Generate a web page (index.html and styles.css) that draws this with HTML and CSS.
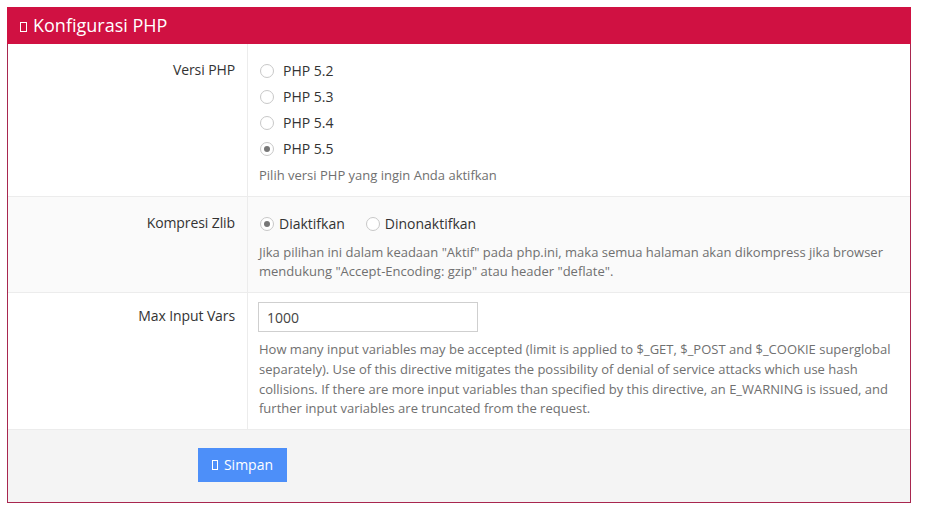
FILE: index.html
```html
<!DOCTYPE html>
<html lang="id">
<head>
<meta charset="utf-8">
<title>Konfigurasi PHP</title>
<link rel="stylesheet" href="styles.css">
</head>
<body>
<div class="panel">
  <div class="panel-heading"><span class="tofu tofu-head"></span>Konfigurasi PHP</div>
  <form class="form">
    <div class="row">
      <div class="label">Versi PHP</div>
      <div class="field">
        <label class="radio"><input type="radio" name="php"> PHP 5.2</label>
        <label class="radio"><input type="radio" name="php"> PHP 5.3</label>
        <label class="radio"><input type="radio" name="php"> PHP 5.4</label>
        <label class="radio"><input type="radio" name="php" checked> PHP 5.5</label>
        <p class="help help-single">Pilih versi PHP yang ingin Anda aktifkan</p>
      </div>
    </div>
    <div class="row row-alt">
      <div class="label">Kompresi Zlib</div>
      <div class="field">
        <div class="inline">
          <label class="radio radio-inline"><input type="radio" name="zlib" checked> Diaktifkan</label>
          <label class="radio radio-inline"><input type="radio" name="zlib"> Dinonaktifkan</label>
        </div>
        <p class="help">Jika pilihan ini dalam keadaan "Aktif" pada php.ini, maka semua halaman akan dikompress jika browser mendukung "Accept-Encoding: gzip" atau header "deflate".</p>
      </div>
    </div>
    <div class="row">
      <div class="label label-input">Max Input Vars</div>
      <div class="field field-input">
        <input class="text" type="text" value="1000">
        <p class="help">How many input variables may be accepted (limit is applied to $_GET, $_POST and $_COOKIE superglobal separately). Use of this directive mitigates the possibility of denial of service attacks which use hash collisions. If there are more input variables than specified by this directive, an E_WARNING is issued, and further input variables are truncated from the request.</p>
      </div>
    </div>
    <div class="footer">
      <button type="button" class="btn"><span class="tofu tofu-btn"></span>Simpan</button>
    </div>
  </form>
</div>
</body>
</html>
```
FILE: styles.css
```css
* { box-sizing: border-box; }
html, body { margin: 0; padding: 0; background: #fff; }
body {
  font-family: "Open Sans", "Liberation Sans", sans-serif;
  font-size: 14px;
  color: #333;
  padding: 7px 15px 0 7px;
}
.panel {
  width: 904px;
  border: 1px solid #a8274f;
  border-top: none;
}
.panel-heading {
  height: 37px;
  background: #d01142;
  color: #fff;
  font-size: 18px;
  line-height: 37px;
  padding-left: 12px;
  margin: 0 -1px;
  display: flex;
  align-items: center;
}
.tofu {
  display: inline-block;
  border: 1px solid currentColor;
}
.tofu-head {
  width: 7px;
  height: 10px;
  margin-right: 6px;
  margin-left: 1px;
  margin-top: 2px;
}
.form { margin: 0; }
.row {
  display: grid;
  grid-template-columns: 240px 1fr;
  border-bottom: 1px solid #ececec;
}
.row-alt { background: #fafafa; }
.label {
  text-align: right;
  padding: 17px 12px 0 0;
  line-height: 18px;
  font-size: 14px;
  letter-spacing: -0.1px;
  border-right: 1px solid #ececec;
}
.label-input { padding-top: 14px; }
.field {
  padding: 18px 15px 10px 11px;
}
.field-input { padding-top: 9px; }
.radio {
  display: flex;
  align-items: center;
  line-height: 18px;
  height: 26px;
  margin-top: -4px;
  margin-bottom: 4px;
  font-size: 14px;
  color: #333;
}
.radio input {
  -webkit-appearance: none;
  appearance: none;
  width: 14px;
  height: 14px;
  border: 1px solid #c8c8c8;
  border-radius: 50%;
  margin: 0 9px 0 1px;
  background: #fff;
  display: inline-grid;
  place-content: center;
}
.radio input:checked::before {
  content: "";
  width: 6px;
  height: 6px;
  border-radius: 50%;
  background: #777;
}
.inline { display: flex; gap: 20px; margin-bottom: 2px; }
.radio-inline input { margin-right: 5px; }
.help {
  margin: 0;
  font-size: 13px;
  line-height: 19.7px;
  color: #707070;
}
.help-single { margin-top: 1px; }
.text {
  display: block;
  width: 220px;
  height: 30px;
  border: 1px solid #cfcfcf;
  padding: 0 8px;
  font-family: inherit;
  font-size: 14px;
  color: #444;
  margin: 0 0 8px -1px;
  background: #fff;
}
.footer {
  background: #f4f4f4;
  height: 72px;
  padding: 18px 0 0 190px;
}
.btn {
  width: 89px;
  height: 34px;
  background: #4d8ff9;
  border: none;
  color: #fff;
  font-family: inherit;
  font-size: 14px;
  display: flex;
  align-items: center;
  justify-content: center;
  padding: 0;
}
.tofu-btn {
  width: 6px;
  height: 10px;
  margin-right: 6px;
}
```
